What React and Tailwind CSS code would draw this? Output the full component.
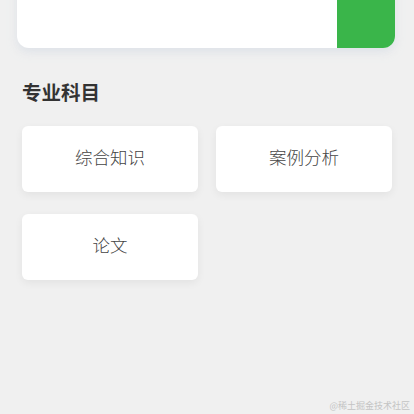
export default function App() {
  const subjects = ['综合知识', '案例分析', '论文']

  return (
    <div
      className="relative h-[414px] w-[414px] overflow-hidden bg-[#f0f0f0]"
      style={{ fontFamily: '"Noto Sans CJK SC", "Noto Sans", sans-serif' }}
    >
      <div className="ml-[17px] mr-[19px] mt-[-22px] flex h-[70px] overflow-hidden rounded-[12px] bg-white shadow-[0_4px_10px_rgba(210,216,226,0.6)]">
        <div className="flex-1" />
        <div className="w-[58px] bg-[#3ab54a]" />
      </div>

      <h2 className="ml-[22px] mt-[31px] text-[19.5px] font-bold leading-[26px] text-[#333]">
        专业科目
      </h2>

      <div className="mx-[22px] mt-[21px] grid grid-cols-2 gap-x-[18px] gap-y-[22px]">
        {subjects.map((s) => (
          <button
            key={s}
            type="button"
            className="flex h-[66px] items-center justify-center rounded-[6px] bg-white pb-[3px] text-[17.5px] font-light text-[#444] shadow-[0_3px_8px_rgba(0,0,0,0.06)]"
          >
            {s}
          </button>
        ))}
      </div>

      <div className="absolute bottom-[2px] right-[4px] text-[9px] text-[#c4c4c4]">
        @稀土掘金技术社区
      </div>
    </div>
  )
}
